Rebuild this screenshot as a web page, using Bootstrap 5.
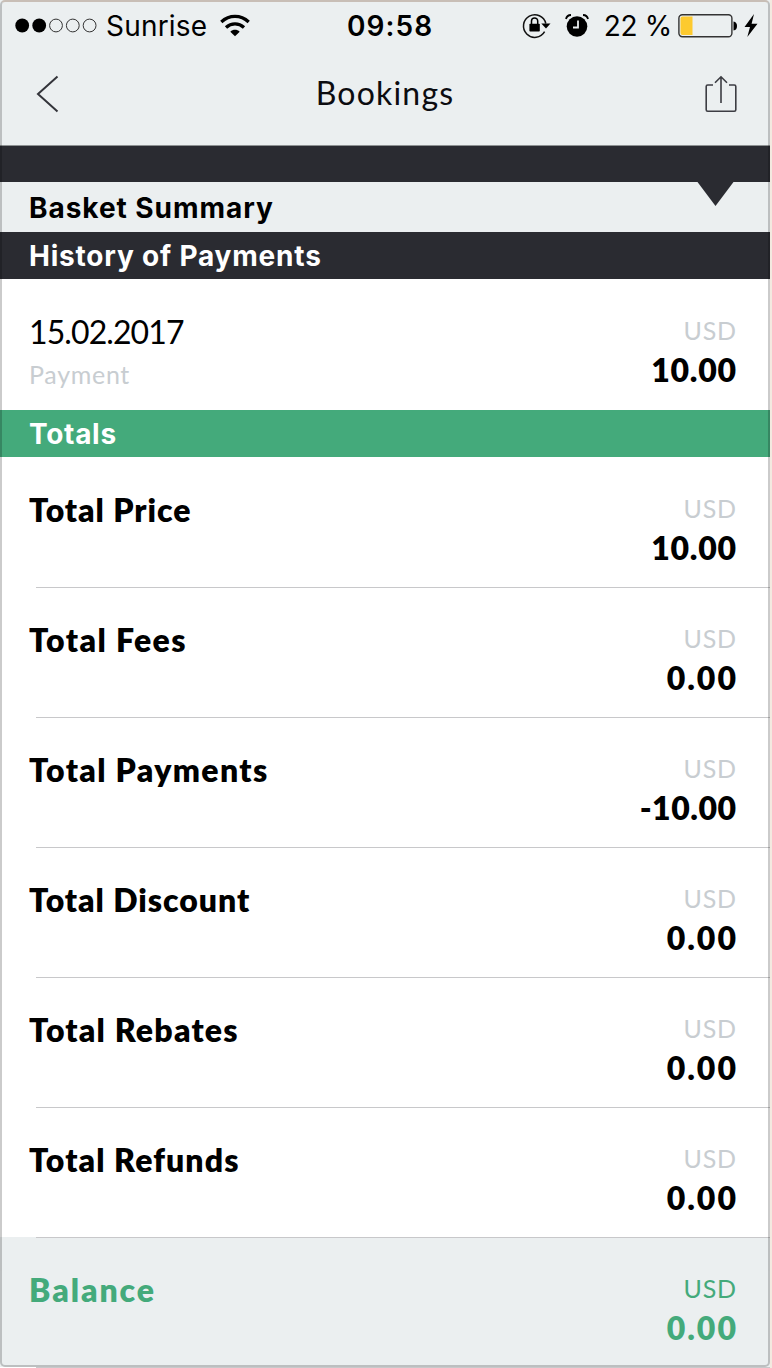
<!DOCTYPE html>
<html lang="en">
<head>
  <meta charset="UTF-8" />
  <meta name="viewport" content="width=device-width, initial-scale=1.0"/>
  <title>Bookings</title>
  <link href="https://cdn.jsdelivr.net/npm/bootstrap@5.3.3/dist/css/bootstrap.min.css" rel="stylesheet"/>
  <style>
    body {
      background-color: #f3e9e0;
      font-family: Lato, "Liberation Sans", sans-serif;
      color: #000;
    }
    .phone {
      position: relative;
      width: 770px;
      height: 1368px;
      background: #fff;
      overflow: hidden;
    }
    /* translucent edge drawn over every band */
    .phone-edge {
      position: absolute;
      inset: 0 0 1px 0;
      border: 2px solid rgba(0, 0, 0, 0.2);
      border-top-color: #c8beb6;
      border-radius: 5px;
      pointer-events: none;
    }
    .top-area {
      height: 146px;
      background: #ebeff0;
      border-bottom: 1px solid #8d9192;
    }
    .status-bar {
      position: relative;
      height: 52px;
      padding: 0 12px 0 15px;
      font-family: Inter, "Liberation Sans", sans-serif;
      font-size: 28px;
      line-height: 54px;
    }
    .carrier {
      margin-left: 8px;
      letter-spacing: 0.2px;
    }
    .wifi {
      margin-left: 12px;
    }
    .clock {
      position: absolute;
      left: 347px;
      font-weight: 600;
      letter-spacing: 1.1px;
    }
    .percent {
      margin-left: 15px;
      letter-spacing: -0.3px;
    }
    .battery {
      margin-left: 6px;
    }
    .title-bar {
      height: 92px;
      padding: 0 33px 9px 36px;
    }
    .page-title {
      font-size: 32px;
      line-height: 38px;
      letter-spacing: 1.2px;
      margin: -2px 0 0 5px;
      color: #0c0c10;
    }
    .dark-strip {
      height: 36px;
      background: #2a2b31;
    }
    .heading {
      padding-left: 29px;
      font-family: Inter, "Liberation Sans", sans-serif;
      font-size: 28px;
      font-weight: 700;
      letter-spacing: 0.95px;
    }
    .heading-basket {
      position: relative;
      height: 50px;
      line-height: 52px;
      background: #ebeff0;
    }
    .pointer {
      position: absolute;
      top: 0;
      right: 36px;
    }
    .heading-history {
      height: 47px;
      line-height: 49px;
      background: #2a2b31;
      color: #fff;
      letter-spacing: 0.8px;
    }
    .heading-totals {
      height: 47px;
      line-height: 49px;
      background: #44aa7b;
      color: #fff;
      letter-spacing: 0.7px;
    }
    .entry {
      height: 130px;
      padding: 32px 34px 0 29px;
    }
    .entry-payment {
      height: 131px;
    }
    .entry-line {
      height: 1px;
      margin: 0 0 -1px 36px;
      background: #c8c8ca;
      position: relative;
    }
    .entry-date {
      font-size: 32px;
      line-height: 42px;
      letter-spacing: -0.9px;
    }
    .entry-note {
      font-size: 25px;
      line-height: 40px;
      letter-spacing: 0.7px;
      margin-top: 1px;
      color: #c8cdd1;
    }
    .entry-title {
      font-size: 32px;
      font-weight: 800;
      line-height: 42px;
    }
    .currency {
      font-size: 25px;
      line-height: 39px;
      letter-spacing: 0.7px;
      margin-right: -0.7px;
      color: #c8cdd1;
    }
    .amount {
      font-size: 32px;
      font-weight: 800;
      line-height: 40px;
    }
    .entry-balance {
      background: #ebeff0;
    }
    .entry-balance, .entry-balance .currency {
      color: #44aa7b;
    }
  </style>
</head>
<body>
  <div class="phone">
    <header class="top-area">
      <div class="status-bar d-flex align-items-center">
        <svg width="83" height="16" viewBox="0 0 83 16">
          <circle cx="7.2" cy="7.5" r="6.9"/>
          <circle cx="24.2" cy="7.5" r="6.9"/>
          <g fill="none" stroke="#333" stroke-width="1">
            <circle cx="41" cy="7.5" r="6.4"/>
            <circle cx="57.8" cy="7.5" r="6.4"/>
            <circle cx="74.6" cy="7.5" r="6.4"/>
          </g>
        </svg>
        <span class="carrier">Sunrise</span>
        <svg class="wifi" width="32" height="24" viewBox="0 0 32 24">
          <g fill="none" stroke="#000" stroke-width="3.3">
            <path d="M2.300 8C10.300 0.600 21.700 0.600 29.700 8"/>
            <path d="M7 13.500C12.300 8.600 19.700 8.600 25 13.500"/>
          </g>
          <path d="M11.300 17.700C14 15.200 18 15.200 20.700 17.700L16 22.300Z"/>
        </svg>
        <span class="clock">09:58</span>
        <svg class="ms-auto" width="30" height="28" viewBox="0 0 30 28">
          <path d="M22.600 19.700A11.300 11.300 0 1 1 23.800 11.500" fill="none" stroke="#111" stroke-width="1.500"/>
          <path d="M19.300 11.500H28.500L24 16.500Z"/>
          <rect x="7.400" y="11.800" width="10.400" height="7.700" rx="0.800"/>
          <path d="M9.500 12.500V9a3.100 3.100 0 0 1 6.200 0V12.500" fill="none" stroke="#000" stroke-width="1.500"/>
        </svg>
        <svg class="alarm" width="24" height="26" viewBox="0 0 24 26" style="margin-left: 13px">
          <circle cx="12" cy="13.500" r="10.300"/>
          <path d="M1 6C1.500 3.500 3.500 2.100 6 2M23 6C22.500 3.500 20.500 2.100 18 2" fill="none" stroke="#000" stroke-width="1.800"/>
          <path d="M13 7.500V14.500H8" fill="none" stroke="#ebeff0" stroke-width="1.800"/>
        </svg>
        <span class="percent">22 %</span>
        <svg width="80" height="30" viewBox="0 0 80 30" class="battery">
          <rect x="0.900" y="3.700" width="53" height="22" rx="3.500" fill="none" stroke="#333" stroke-width="1.400"/>
          <path d="M4.500 5.500H14.500V24H4.500Q2.500 24 2.500 22V7.500Q2.500 5.500 4.500 5.500Z" fill="#fdca2f"/>
          <path d="M55.500 10.500Q59 11 59 15Q59 19 55.500 19.500Z"/>
          <path d="M76 3L66.500 16H72L69.300 26L79.500 12.800H73.600Z"/>
        </svg>
      </div>
      <div class="title-bar d-flex justify-content-between align-items-center">
        <svg width="24" height="38" viewBox="0 0 24 38" fill="none" stroke="#33343a" stroke-width="2">
          <path d="M21.500 1.500L2 19L21.500 36.500"/>
        </svg>
        <span class="page-title">Bookings</span>
        <svg width="32" height="38" viewBox="0 0 32 38" fill="none" stroke="#3c3d43" stroke-width="1.600">
          <path d="M8 10H2.700Q1.200 10 1.200 11.500V34.800Q1.200 36.300 2.700 36.300H29.300Q30.800 36.300 30.800 34.800V11.500Q30.800 10 29.300 10H24"/>
          <path d="M16 28V2M10 7.800L16 1.800L22 7.800"/>
        </svg>
      </div>
    </header>

    <div class="dark-strip"></div>
    <div class="heading heading-basket">
      Basket Summary
      <svg class="pointer" width="37" height="25" viewBox="0 0 37 25">
        <path d="M0.500 0H36.500L18.500 24Z" fill="#2a2b31"/>
      </svg>
    </div>
    <div class="heading heading-history">History of Payments</div>

    <div class="entry entry-payment d-flex justify-content-between">
      <div>
        <div class="entry-date">15.02.2017</div>
        <div class="entry-note">Payment</div>
      </div>
      <div class="text-end">
        <div class="currency">USD</div>
        <div class="amount" style="letter-spacing: 0.7px; margin-right: -0.7px">10.00</div>
      </div>
    </div>

    <div class="heading heading-totals">Totals</div>
    <main id="totals"></main>
    <div class="phone-edge"></div>
  </div>

  <script src="https://cdn.jsdelivr.net/npm/bootstrap@5.3.3/dist/js/bootstrap.bundle.min.js"></script>
  <script>
    // title, amount, title tracking, amount tracking
    const totals = [
      ["Total Price", "10.00", 0.95, 0.7],
      ["Total Fees", "0.00", 1.4, 2],
      ["Total Payments", "-10.00", 1.35, 0.5],
      ["Total Discount", "0.00", 0.95, 2],
      ["Total Rebates", "0.00", 1.2, 2],
      ["Total Refunds", "0.00", 1.1, 2],
      ["Balance", "0.00", 1.95, 2]
    ];

    document.getElementById("totals").innerHTML = totals.map(function (row) {
      const extra = row[0] === "Balance" ? " entry-balance" : "";
      return `
        <div class="entry${extra} d-flex justify-content-between">
          <div class="entry-title" style="letter-spacing: ${row[2]}px">${row[0]}</div>
          <div class="text-end">
            <div class="currency">USD</div>
            <div class="amount" style="letter-spacing: ${row[3]}px; margin-right: ${-row[3]}px">${row[1]}</div>
          </div>
        </div>
        <div class="entry-line"></div>`;
    }).join("");
  </script>
</body>
</html>
